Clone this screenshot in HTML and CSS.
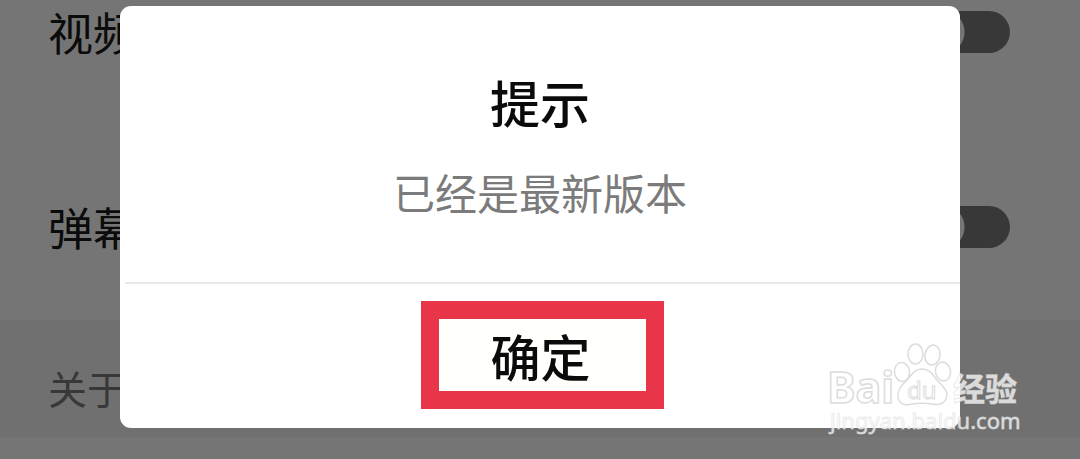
FILE: index.html
```html
<!DOCTYPE html>
<html lang="zh-CN">
<head>
<meta charset="utf-8">
<meta name="viewport" content="width=device-width, initial-scale=1">
<title>提示</title>
<link rel="stylesheet" href="styles.css">
</head>
<body>
<main class="settings">
  <div class="row">
    <label class="row-label" for="video">视频</label>
    <input class="switch" type="checkbox" id="video">
  </div>
  <div class="row">
    <label class="row-label" for="danmaku">弹幕</label>
    <input class="switch" type="checkbox" id="danmaku">
  </div>
  <h2 class="section">关于</h2>
</main>
<div class="overlay">
  <div class="dialog" role="dialog" aria-modal="true" aria-labelledby="title">
    <div class="dialog-body">
      <h1 class="title" id="title">提示</h1>
      <p class="message">已经是最新版本</p>
    </div>
    <div class="actions">
      <button class="confirm" type="button">确定</button>
    </div>
  </div>
</div>
<svg class="watermark" width="200" height="100" viewBox="0 0 200 100" role="img" aria-label="Baidu 经验">
  <g class="mark">
    <text class="brand" x="2" y="63">Bai</text>
    <ellipse cx="77" cy="32" rx="7.5" ry="9.5" transform="rotate(-8 77 32)"/>
    <ellipse cx="90.5" cy="14" rx="7.5" ry="10"/>
    <ellipse cx="107.5" cy="15" rx="7.5" ry="10" transform="rotate(10 107.5 15)"/>
    <ellipse cx="118" cy="31.5" rx="7.5" ry="9.5" transform="rotate(-12 118 31.5)"/>
    <path d="M97 29C89 29 86 36 81 41C77 45 72 50 73 57C74 64 80 66 87 64C94 63 100 63 107 64C115 66 121 63 122 55C122 48 116 45 112 40C108 35 105 29 97 29Z"/>
    <text class="du" x="82" y="59">du</text>
    <text class="cn" x="128" y="61">经验</text>
    <text class="url" x="5" y="89">jingyan.baidu.com</text>
  </g>
</svg>
</body>
</html>
```
FILE: styles.css
```css
* { box-sizing: border-box; }

body {
  margin: 0;
  min-height: 100vh;
  position: relative;
  overflow: hidden;
  background: #757575;
  color: #0b0b0b;
  font-family: "Noto Sans CJK SC", sans-serif;
}

.settings {
  display: flex;
  flex-direction: column;
}

.row {
  display: flex;
  align-items: center;
  justify-content: space-between;
  height: 64px;
  margin-bottom: 131px;
  padding: 0 70px 0 48px;
}

.row + .row { margin-bottom: 61px; }

.row-label {
  font-size: 45px;
  line-height: 64px;
}

.switch {
  appearance: none;
  width: 88px;
  height: 42px;
  margin: 0;
  border-radius: 21px;
  background: radial-gradient(circle at 21px 21px, #757575 21px, #383838 22px);
}

.section {
  margin: 0;
  padding: 37px 48px 20px;
  background: #707070;
  color: #383838;
  font-size: 39px;
  font-weight: 400;
  line-height: 60px;
}

.overlay {
  position: absolute;
  inset: 0;
  padding: 6px 120px;
}

.dialog {
  border-radius: 11px;
  background: #fff;
  text-align: center;
}

.dialog-body {
  padding: 58px 20px 56px;
}

.title {
  margin: 0 0 20px;
  font-size: 50px;
  font-weight: 500;
  line-height: 74px;
}

.message {
  margin: 0;
  color: #7b7b7b;
  font-size: 42px;
  line-height: 68px;
}

.actions {
  display: flex;
  justify-content: center;
  margin-left: 5px;
  padding: 17px 0 19px;
  border-top: 2px solid #e9e9e9;
}

.confirm {
  width: 243px;
  height: 108px;
  padding: 0 4px 0 0;
  border: 18px solid #e93549;
  background: #fffffc;
  color: #0b0b0b;
  font-family: inherit;
  font-size: 50px;
  font-weight: 500;
  line-height: 70px;
}

.watermark {
  position: absolute;
  right: 55px;
  bottom: 19px;
  overflow: visible;
  pointer-events: none;
}

.mark {
  fill: #fff;
  fill-opacity: 0.75;
  stroke: #dcdcdc;
  stroke-width: 1.5;
}

.brand { font: 700 43px "Noto Sans", sans-serif; }
.du { font: 400 24px "Noto Sans", sans-serif; stroke-width: 1; }
.cn { font: 700 32px "Noto Sans CJK SC", sans-serif; stroke-width: 1; stroke-opacity: 0.6; }
.url { font: 400 22px "Noto Sans", sans-serif; stroke-width: 1; stroke-opacity: 0.6; }
```
